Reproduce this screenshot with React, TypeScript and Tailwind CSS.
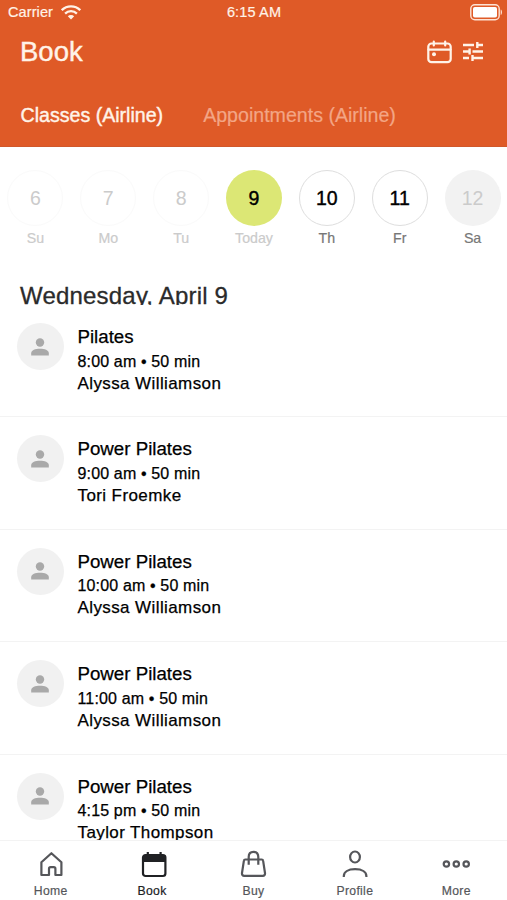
import type { ReactNode } from "react";
import clsx from "clsx";

const days = [
  { date: 6, label: "Su", circle: "border border-[#fafafa] text-[#cbcbcb]", text: "text-[#cbcbcb]" },
  { date: 7, label: "Mo", circle: "border border-[#fafafa] text-[#cbcbcb]", text: "text-[#cbcbcb]" },
  { date: 8, label: "Tu", circle: "border border-[#fafafa] text-[#cbcbcb]", text: "text-[#cbcbcb]" },
  { date: 9, label: "Today", circle: "bg-[#dce775] text-black [-webkit-text-stroke:0.4px]", text: "text-[#cbcbcb]" },
  { date: 10, label: "Th", circle: "border border-[#dedede] text-black [-webkit-text-stroke:0.4px]", text: "text-[#777777]" },
  { date: 11, label: "Fr", circle: "border border-[#dedede] text-black [-webkit-text-stroke:0.4px]", text: "text-[#777777]" },
  { date: 12, label: "Sa", circle: "bg-[#f2f2f2] text-[#cbcbcb]", text: "text-[#777777]" },
];

const classes = [
  { name: "Pilates", time: "8:00 am", teacher: "Alyssa Williamson" },
  { name: "Power Pilates", time: "9:00 am", teacher: "Tori Froemke" },
  { name: "Power Pilates", time: "10:00 am", teacher: "Alyssa Williamson" },
  { name: "Power Pilates", time: "11:00 am", teacher: "Alyssa Williamson" },
  { name: "Power Pilates", time: "4:15 pm", teacher: "Taylor Thompson" },
];

const tabs: { label: string; active?: boolean; icon: ReactNode }[] = [
  {
    label: "Home",
    icon: <path d="M4.4 12.2 14.4 3.2l10 9V25h-6v-6.200c0-1-.6-1.600-1.600-1.600h-3.200c-1 0-1.600.6-1.600 1.600V25H4.4z" />,
  },
  {
    label: "Book",
    active: true,
    icon: (
      <>
        <rect x="5" y="5" width="22.400" height="21" rx="2.500" />
        <path d="M5 5h22.400v7H5z" fill="currentColor" stroke="none" />
        <path d="M9.800 2v3M22.600 2v3" />
      </>
    ),
  },
  {
    label: "Buy",
    icon: (
      <>
        <path d="M6.300 9.500h16.400c.8 0 1.300.4 1.400 1.200l1.900 12.300c.2 1.700-.6 2.800-2.200 2.800H5.200c-1.600 0-2.400-1.100-2.200-2.800l1.900-12.300c.1-.8.6-1.200 1.400-1.200z" />
        <path d="M9.700 14.700V7c0-3.200 1.700-5.200 4.800-5.200s4.800 2 4.800 5.200v7.700" />
      </>
    ),
  },
  {
    label: "Profile",
    icon: (
      <>
        <ellipse cx="14" cy="7" rx="4.900" ry="5.500" />
        <path d="M2.800 27v-.8c0-4.300 4.200-7 11.300-7s11.300 2.700 11.300 7v.8" />
      </>
    ),
  },
  {
    label: "More",
    icon: (
      <>
        <circle cx="4.400" cy="14" r="2.700" />
        <circle cx="14.300" cy="14" r="2.700" />
        <circle cx="24.200" cy="14" r="2.700" />
      </>
    ),
  },
];

function StatusBar() {
  return (
    <div className="grid h-[25px] grid-cols-3 items-center pr-[4px] pl-[8px] text-[14.5px] leading-none [-webkit-text-stroke:0.2px]">
      <div className="flex items-center gap-[8px]">
        <span className="tracking-[0.1px]">Carrier</span>
        <svg width="20" height="15" viewBox="0 0 20 15" fill="none" stroke="currentColor" strokeWidth="2.3">
          <path d="M.8 5.200a13 13 0 0 1 18.400 0" />
          <path d="M4.100 8.600a8.400 8.400 0 0 1 11.800 0" />
          <path d="M10 14.500 6.800 11.300a4.600 4.600 0 0 1 6.400 0z" fill="currentColor" stroke="none" />
        </svg>
      </div>
      <span className="-ml-[3px] text-center tracking-[0.15px]">6:15 AM</span>
      <svg className="justify-self-end" width="33" height="17" viewBox="0 0 33 17" fill="none">
        <rect x=".8" y=".8" width="28.400" height="15" rx="4" stroke="#fde3d5" strokeWidth="1.400" />
        <rect x="3" y="3" width="24" height="10.600" rx="1.800" fill="#fff" />
        <path d="M30.700 5.500c1.700.5 1.700 5 0 5.500z" fill="#fde3d5" />
      </svg>
    </div>
  );
}

function Header() {
  return (
    <header className="h-[147px] shrink-0 border-b border-[#d0582b] bg-[#df5a27] text-[#fff3e8]">
      <StatusBar />
      <div className="flex h-[53px] items-center justify-between pr-[23px] pl-[20px]">
        <h1 className="pt-px text-[27.500px] leading-none [-webkit-text-stroke:0.4px]">Book</h1>
        <div className="flex items-center gap-[10px]">
          <svg width="26" height="24" viewBox="0 0 26 24" fill="none" stroke="currentColor" strokeWidth="2.200" strokeLinecap="round">
            <rect x="1.300" y="3.500" width="22.400" height="18.700" rx="3.200" />
            <path d="M1.500 9.600h22M6.800 1.500v4M18.200 1.500v4" />
            <circle cx="7" cy="14.300" r="2" fill="currentColor" stroke="none" />
          </svg>
          <svg width="21" height="21" viewBox="0 0 21 21" fill="none" stroke="currentColor" strokeWidth="2.400">
            <path d="M0 4h11M14.300 1v6M14.300 4h5.700M0 10.500h6M6.600 7.500v6M9.500 10.500H20M0 17h6M9.500 14v6M9.500 17H20" />
          </svg>
        </div>
      </div>
      <nav className="flex gap-[40px] pt-[26px] pl-[20.500px] text-[19.600px] leading-[22px]">
        <span className="[-webkit-text-stroke:0.4px]">Classes (Airline)</span>
        <span className="text-[#f3a585] [-webkit-text-stroke:0.2px]">Appointments (Airline)</span>
      </nav>
    </header>
  );
}

function DayPicker() {
  return (
    <div className="-ml-px flex w-[510px] shrink-0 pt-[23px]">
      {days.map((day) => (
        <div key={day.date} className="flex flex-1 flex-col items-center">
          <div className={clsx("flex size-[56px] items-center justify-center rounded-full pt-px text-[19.500px]", day.circle)}>
            {day.date}
          </div>
          <span className={clsx("mt-[4px] mb-px text-[14.200px] leading-[16px] [-webkit-text-stroke:0.2px]", day.text)}>{day.label}</span>
        </div>
      ))}
    </div>
  );
}

function Avatar() {
  return (
    <div className="flex size-[47px] shrink-0 items-center justify-center rounded-full bg-[#f1f1f1]">
      <svg className="-ml-px" width="18" height="18" viewBox="0 0 18 18" fill="#a9a9a9">
        <circle cx="9" cy="4.500" r="4.200" />
        <path d="M.2 17.400v-2.200c0-3 4.200-4.400 8.800-4.400s8.800 1.400 8.800 4.400v2.200z" />
      </svg>
    </div>
  );
}

export default function App() {
  return (
    <div className="flex h-[900px] w-[507px] flex-col overflow-hidden bg-white font-['Liberation_Sans',Arial,sans-serif] text-black">
      <Header />
      <DayPicker />

      <h2 className="mt-[35px] h-[23px] shrink-0 overflow-hidden pl-[20px] text-[24px] leading-[28px] tracking-[0.200px] text-[#2b2b2b] [-webkit-text-stroke:0.3px]">
        Wednesday, April 9
      </h2>

      <main className="min-h-0 flex-1 overflow-hidden">
        {classes.map((item, i) => (
          <div key={i} className="flex h-[112.400px] gap-[13.500px] border-b border-[#f3f3f3] pt-[18px] pl-[17px]">
            <Avatar />
            <div className="pt-[3px] [-webkit-text-stroke:0.25px]">
              <p className="text-[18.700px] leading-[22px]">{item.name}</p>
              <p className="mt-[2.500px] text-[16px] leading-[22px] tracking-[0.150px]">{item.time} • 50 min</p>
              <p className="text-[17px] leading-[22px] tracking-[0.400px]">{item.teacher}</p>
            </div>
          </div>
        ))}
      </main>

      <nav className="grid h-[60px] shrink-0 grid-cols-5 border-t border-[#f3f3f3] bg-white">
        {tabs.map((tab) => (
          <div
            key={tab.label}
            className={clsx("flex flex-col items-center pt-[9px]", tab.active ? "text-[#202124]" : "text-[#55565a]")}
          >
            <svg className="overflow-visible" width="28" height="28" viewBox="0 0 28 28" fill="none" stroke="currentColor" strokeWidth="2.200" strokeLinejoin="round">
              {tab.icon}
            </svg>
            <span className="mt-[6px] text-[12.200px] leading-[15px] tracking-[0.300px] [-webkit-text-stroke:0.2px]">{tab.label}</span>
          </div>
        ))}
      </nav>
    </div>
  );
}
